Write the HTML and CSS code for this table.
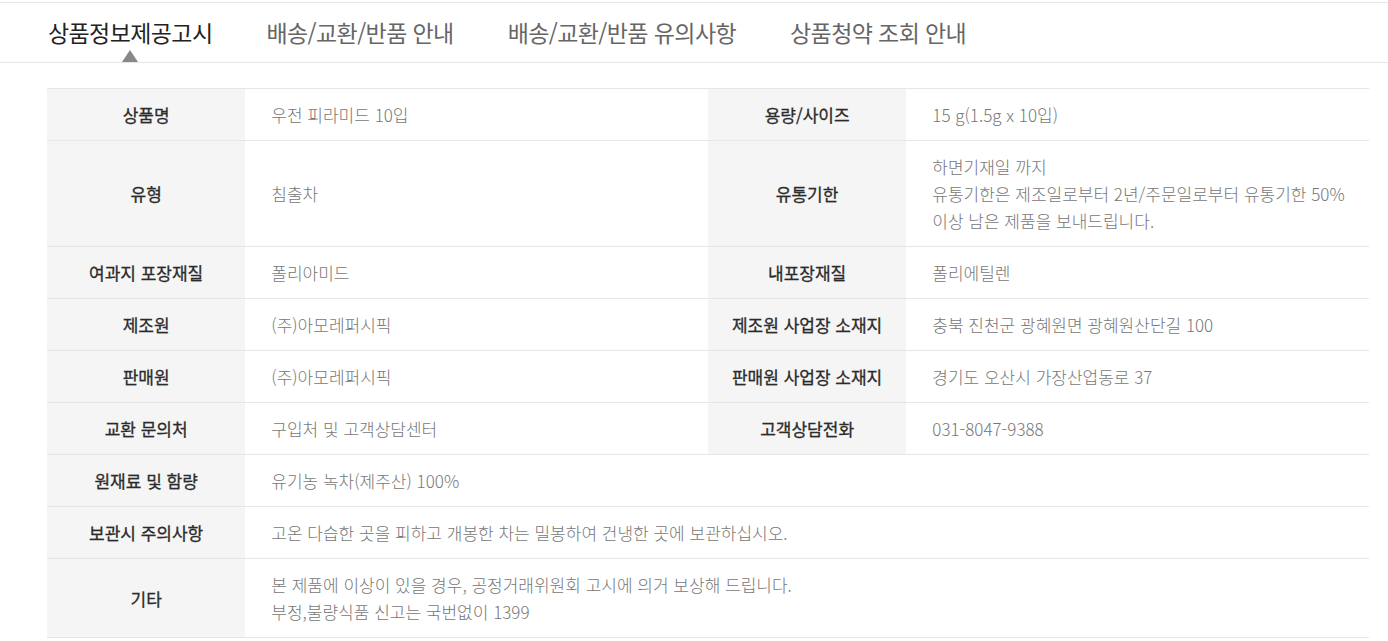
FILE: index.html
```html
<!DOCTYPE html>
<html lang="ko">
<head>
<meta charset="utf-8">
<title>상품정보제공고시</title>
<link rel="stylesheet" href="styles.css">
</head>
<body>
<nav class="tabs">
  <ul class="tab-list">
    <li class="tab active">상품정보제공고시</li>
    <li class="tab">배송/교환/반품 안내</li>
    <li class="tab">배송/교환/반품 유의사항</li>
    <li class="tab">상품청약 조회 안내</li>
  </ul>
</nav>
<section class="info">
  <table class="info-table">
    <colgroup>
      <col class="c-th"><col class="c-td"><col class="c-th"><col class="c-td">
    </colgroup>
    <tbody>
      <tr>
        <th>상품명</th><td>우전 피라미드 10입</td>
        <th>용량/사이즈</th><td>15 g(1.5g x 10입)</td>
      </tr>
      <tr>
        <th>유형</th><td>침출차</td>
        <th>유통기한</th><td>하면기재일 까지<br>유통기한은 제조일로부터 2년/주문일로부터 유통기한 50%<br>이상 남은 제품을 보내드립니다.</td>
      </tr>
      <tr>
        <th>여과지 포장재질</th><td>폴리아미드</td>
        <th>내포장재질</th><td>폴리에틸렌</td>
      </tr>
      <tr>
        <th>제조원</th><td>(주)아모레퍼시픽</td>
        <th>제조원 사업장 소재지</th><td>충북 진천군 광혜원면 광혜원산단길 100</td>
      </tr>
      <tr>
        <th>판매원</th><td>(주)아모레퍼시픽</td>
        <th>판매원 사업장 소재지</th><td>경기도 오산시 가장산업동로 37</td>
      </tr>
      <tr>
        <th>교환 문의처</th><td>구입처 및 고객상담센터</td>
        <th>고객상담전화</th><td>031-8047-9388</td>
      </tr>
      <tr>
        <th>원재료 및 함량</th><td colspan="3">유기농 녹차(제주산) 100%</td>
      </tr>
      <tr>
        <th>보관시 주의사항</th><td colspan="3">고온 다습한 곳을 피하고 개봉한 차는 밀봉하여 건냉한 곳에 보관하십시오.</td>
      </tr>
      <tr>
        <th>기타</th><td colspan="3">본 제품에 이상이 있을 경우, 공정거래위원회 고시에 의거 보상해 드립니다.<br>부정,불량식품 신고는 국번없이 1399</td>
      </tr>
    </tbody>
  </table>
</section>
</body>
</html>
```

FILE: styles.css
```css
* { box-sizing: border-box; }
html, body { margin: 0; padding: 0; background: #fff; }
body {
  font-family: "Noto Sans CJK KR", "Noto Sans", sans-serif;
  color: #333;
}
.tabs {
  margin-top: 2px;
  border-top: 1px solid #e6e6e6;
  border-bottom: 1px solid #e6e6e6;
  height: 61px;
}
.tab-list {
  list-style: none;
  margin: 0;
  padding: 0 0 0 48px;
  display: flex;
  gap: 54px;
  height: 100%;
}
.tab {
  position: relative;
  font-size: 23px;
  line-height: 1;
  padding-top: 18px;
  color: #666;
  letter-spacing: -0.6px;
}
.tab.active { color: #222; }
.tab.active::after {
  content: "";
  position: absolute;
  left: 50%;
  top: 47px;
  margin-left: -8px;
  border-left: 8px solid transparent;
  border-right: 8px solid transparent;
  border-bottom: 12px solid #888;
}
.info {
  padding: 25px 19px 0 47px;
}
.info-table {
  width: 100%;
  border-collapse: collapse;
  border-top: 1px solid #e6e6e6;
  table-layout: fixed;
}
.c-th { width: 15%; }
.c-td { width: 35%; }
.info-table th,
.info-table td {
  border-bottom: 1px solid #e6e6e6;
  font-size: 17px;
  line-height: 27px;
  padding: 12px 0;
  vertical-align: middle;
}
.info-table th {
  background: #f5f5f5;
  color: #2b2b2b;
  font-weight: 400;
  -webkit-text-stroke: 0.3px #2b2b2b;
  text-align: center;
}
.info-table td {
  color: #777;
  font-weight: 300;
  text-align: left;
  padding-left: 26px;
  padding-right: 12px;
}
```
